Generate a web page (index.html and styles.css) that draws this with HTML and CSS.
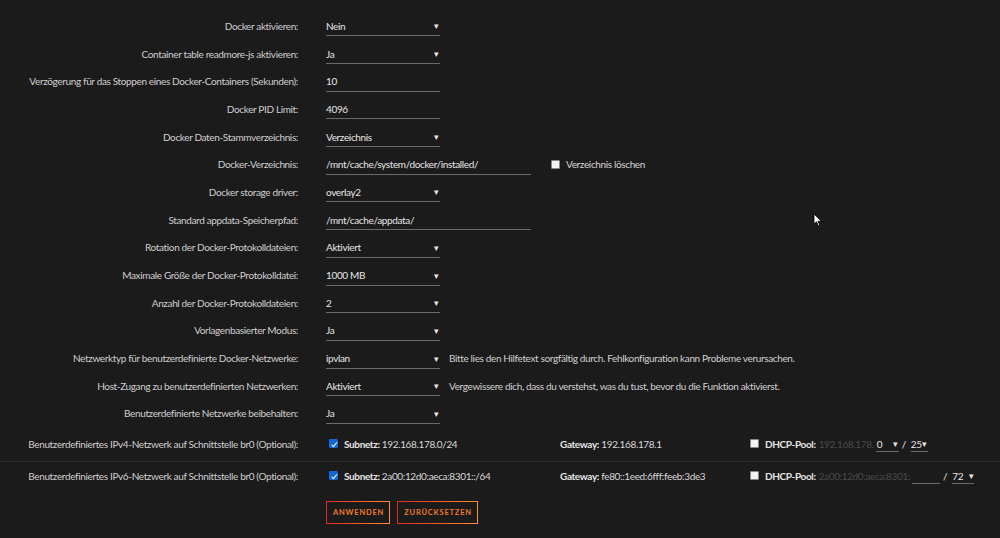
FILE: index.html
```html
<!DOCTYPE html>
<html lang="de">
<head>
  <meta charset="UTF-8">
  <link rel="stylesheet" href="styles.css">
</head>
<body>
  <form class="settings">
    <div class="row">
      <label class="label">Docker aktivieren:</label>
      <div class="field"><span class="select">Nein<i>▾</i></span></div>
    </div>
    <div class="row">
      <label class="label">Container table readmore-js aktivieren:</label>
      <div class="field"><span class="select">Ja<i>▾</i></span></div>
    </div>
    <div class="row">
      <label class="label">Verzögerung für das Stoppen eines Docker-Containers (Sekunden):</label>
      <div class="field"><span class="select">10</span></div>
    </div>
    <div class="row">
      <label class="label">Docker PID Limit:</label>
      <div class="field"><span class="select">4096</span></div>
    </div>
    <div class="row">
      <label class="label">Docker Daten-Stammverzeichnis:</label>
      <div class="field"><span class="select">Verzeichnis<i>▾</i></span></div>
    </div>
    <div class="row">
      <label class="label">Docker-Verzeichnis:</label>
      <div class="field">
        <span class="select wide">/mnt/cache/system/docker/installed/</span>
        <span class="check"><span class="box"></span>Verzeichnis löschen</span>
      </div>
    </div>
    <div class="row">
      <label class="label">Docker storage driver:</label>
      <div class="field"><span class="select">overlay2<i>▾</i></span></div>
    </div>
    <div class="row">
      <label class="label">Standard appdata-Speicherpfad:</label>
      <div class="field"><span class="select wide">/mnt/cache/appdata/</span></div>
    </div>
    <div class="row">
      <label class="label">Rotation der Docker-Protokolldateien:</label>
      <div class="field"><span class="select">Aktiviert<i>▾</i></span></div>
    </div>
    <div class="row">
      <label class="label">Maximale Größe der Docker-Protokolldatei:</label>
      <div class="field"><span class="select">1000 MB<i>▾</i></span></div>
    </div>
    <div class="row">
      <label class="label">Anzahl der Docker-Protokolldateien:</label>
      <div class="field"><span class="select">2<i>▾</i></span></div>
    </div>
    <div class="row">
      <label class="label">Vorlagenbasierter Modus:</label>
      <div class="field"><span class="select">Ja<i>▾</i></span></div>
    </div>
    <div class="row">
      <label class="label">Netzwerktyp für benutzerdefinierte Docker-Netzwerke:</label>
      <div class="field">
        <span class="select">ipvlan<i>▾</i></span>
        <span class="hint">Bitte lies den Hilfetext sorgfältig durch. Fehlkonfiguration kann Probleme verursachen.</span>
      </div>
    </div>
    <div class="row">
      <label class="label">Host-Zugang zu benutzerdefinierten Netzwerken:</label>
      <div class="field">
        <span class="select">Aktiviert<i>▾</i></span>
        <span class="hint">Vergewissere dich, dass du verstehst, was du tust, bevor du die Funktion aktivierst.</span>
      </div>
    </div>
    <div class="row">
      <label class="label">Benutzerdefinierte Netzwerke beibehalten:</label>
      <div class="field"><span class="select">Ja<i>▾</i></span></div>
    </div>

    <div class="row net v4">
      <label class="label">Benutzerdefiniertes IPv4-Netzwerk auf Schnittstelle br0 (Optional):</label>
      <div class="netgrid">
        <span class="check"><span class="box on"></span><span><b>Subnetz:</b> 192.168.178.0/24</span></span>
        <span><b>Gateway:</b> 192.168.178.1</span>
        <span class="pool">
          <span class="box"></span><b>DHCP-Pool:</b>
          <span class="muted">192.168.178.</span>
          <span class="select start">0<i>▾</i></span>
          <span class="slash">/</span>
          <span class="select prefix">25<i>▾</i></span>
        </span>
      </div>
    </div>
    <div class="row net v6">
      <label class="label">Benutzerdefiniertes IPv6-Netzwerk auf Schnittstelle br0 (Optional):</label>
      <div class="netgrid">
        <span class="check"><span class="box on"></span><span><b>Subnetz:</b> 2a00:12d0:aeca:8301::/64</span></span>
        <span><b>Gateway:</b> fe80::1eed:6fff:feeb:3de3</span>
        <span class="pool">
          <span class="box"></span><b>DHCP-Pool:</b>
          <span class="muted">2a00:12d0:aeca:8301:</span>
          <span class="select suffix"></span>
          <span class="slash">/</span>
          <span class="select prefix six">72<i>▾</i></span>
        </span>
      </div>
    </div>

    <div class="actions">
      <button type="button">Anwenden</button>
      <button type="button">Zurücksetzen</button>
    </div>
  </form>

  <!-- mouse pointer -->
  <svg class="pointer" width="10" height="14" viewBox="0 0 10 14">
    <path d="M1 1 L1 11 L3.5 8.8 L5.3 12.8 L6.8 12.1 L5 8.3 L8.5 8.3 Z" fill="#fff" stroke="#000" stroke-width="0.8"/>
  </svg>
</body>
</html>
```

FILE: styles.css
```css
* {
  margin: 0;
  padding: 0;
  box-sizing: border-box;
}

body {
  background: #1c1b1b;
  color: #d4d4d4;
  font-family: Lato, "Open Sans", sans-serif;
  font-size: 10px;
  letter-spacing: -0.36px;
  width: 1000px;
  height: 538px;
  overflow: hidden;
  position: relative;
}

.settings {
  padding-top: 12px;
}

/* Zeilen */
.row {
  display: grid;
  grid-template-columns: 298px 1fr;
  column-gap: 28px;
  align-items: center;
  height: 27.7px;
}

.label {
  text-align: right;
  color: #cfcfcf;
}

.field {
  display: flex;
  align-items: center;
  gap: 20px;
}

/* Auswahl- und Textfelder */
.select {
  display: flex;
  justify-content: space-between;
  align-items: center;
  width: 114px;
  height: 21px;
  padding-top: 1px;
  border-bottom: 1.5px solid #6a6a6a;
  color: #e6e6e6;
}

.select i {
  font-style: normal;
  font-size: 9px;
  color: #e6e6e6;
  margin-right: 1px;
}

.select.wide {
  width: 205px;
}

.hint {
  margin-left: -11px;
  color: #d0d0d0;
}

/* Checkboxen */
.check {
  display: flex;
  align-items: center;
  gap: 6px;
}

.box {
  width: 9px;
  height: 9px;
  background: #f4f4f4;
  border: 1px solid #8a8a8a;
  border-radius: 1px;
  position: relative;
}

.box.on {
  background: #1468d6;
  border-color: #1468d6;
}

.box.on::after {
  content: '';
  position: absolute;
  left: 2.5px;
  top: 0.5px;
  width: 2px;
  height: 4.5px;
  border: solid #fff;
  border-width: 0 1.5px 1.5px 0;
  transform: rotate(40deg);
}

/* Netzwerkzeilen */
.net {
  height: auto;
}

.net.v4 {
  padding: 7px 0 9px;
  margin-top: 1px;
  border-bottom: 1px solid #2c2b2b;
}

.net.v6 {
  padding: 5px 0 9px;
}

.netgrid {
  display: grid;
  grid-template-columns: 234px 190px auto;
  align-items: center;
  color: #d8d8d8;
}

.netgrid .check:first-child {
  padding-left: 3px;
}

.netgrid b {
  font-weight: 700;
  color: #e4e4e4;
}

/* DHCP-Pool */
.pool {
  display: flex;
  align-items: center;
}

.pool .box {
  margin-right: 6px;
}

.pool b {
  margin-right: 3px;
}

.muted {
  color: #4a4a4a;
}

.pool .select {
  height: 17px;
}

.select.start {
  width: 23px;
  margin-left: 2px;
  padding-left: 1px;
}

.select.suffix {
  width: 28px;
  margin-left: 2px;
}

.slash {
  margin-left: 3px;
  color: #e6e6e6;
}

.select.prefix {
  width: 17px;
  margin-left: 5px;
}

.select.prefix.six {
  width: 22px;
  margin-left: 5px;
}

/* Schaltflächen */
.actions {
  display: flex;
  gap: 7px;
  margin: 8px 0 0 326px;
}

button {
  height: 23px;
  padding: 0 5px 0 6px;
  background: transparent;
  border: 1.5px solid transparent;
  border-image: linear-gradient(90deg, #e22828 0, #ff8c2f) 1;
  border-radius: 2px;
  font-family: Lato, "Open Sans", sans-serif;
  font-size: 7.5px;
  font-weight: 700;
  letter-spacing: 0.8px;
  text-transform: uppercase;
  color: #f07a2a;
  cursor: pointer;
}

.pointer {
  position: absolute;
  left: 813px;
  top: 213px;
}
```
